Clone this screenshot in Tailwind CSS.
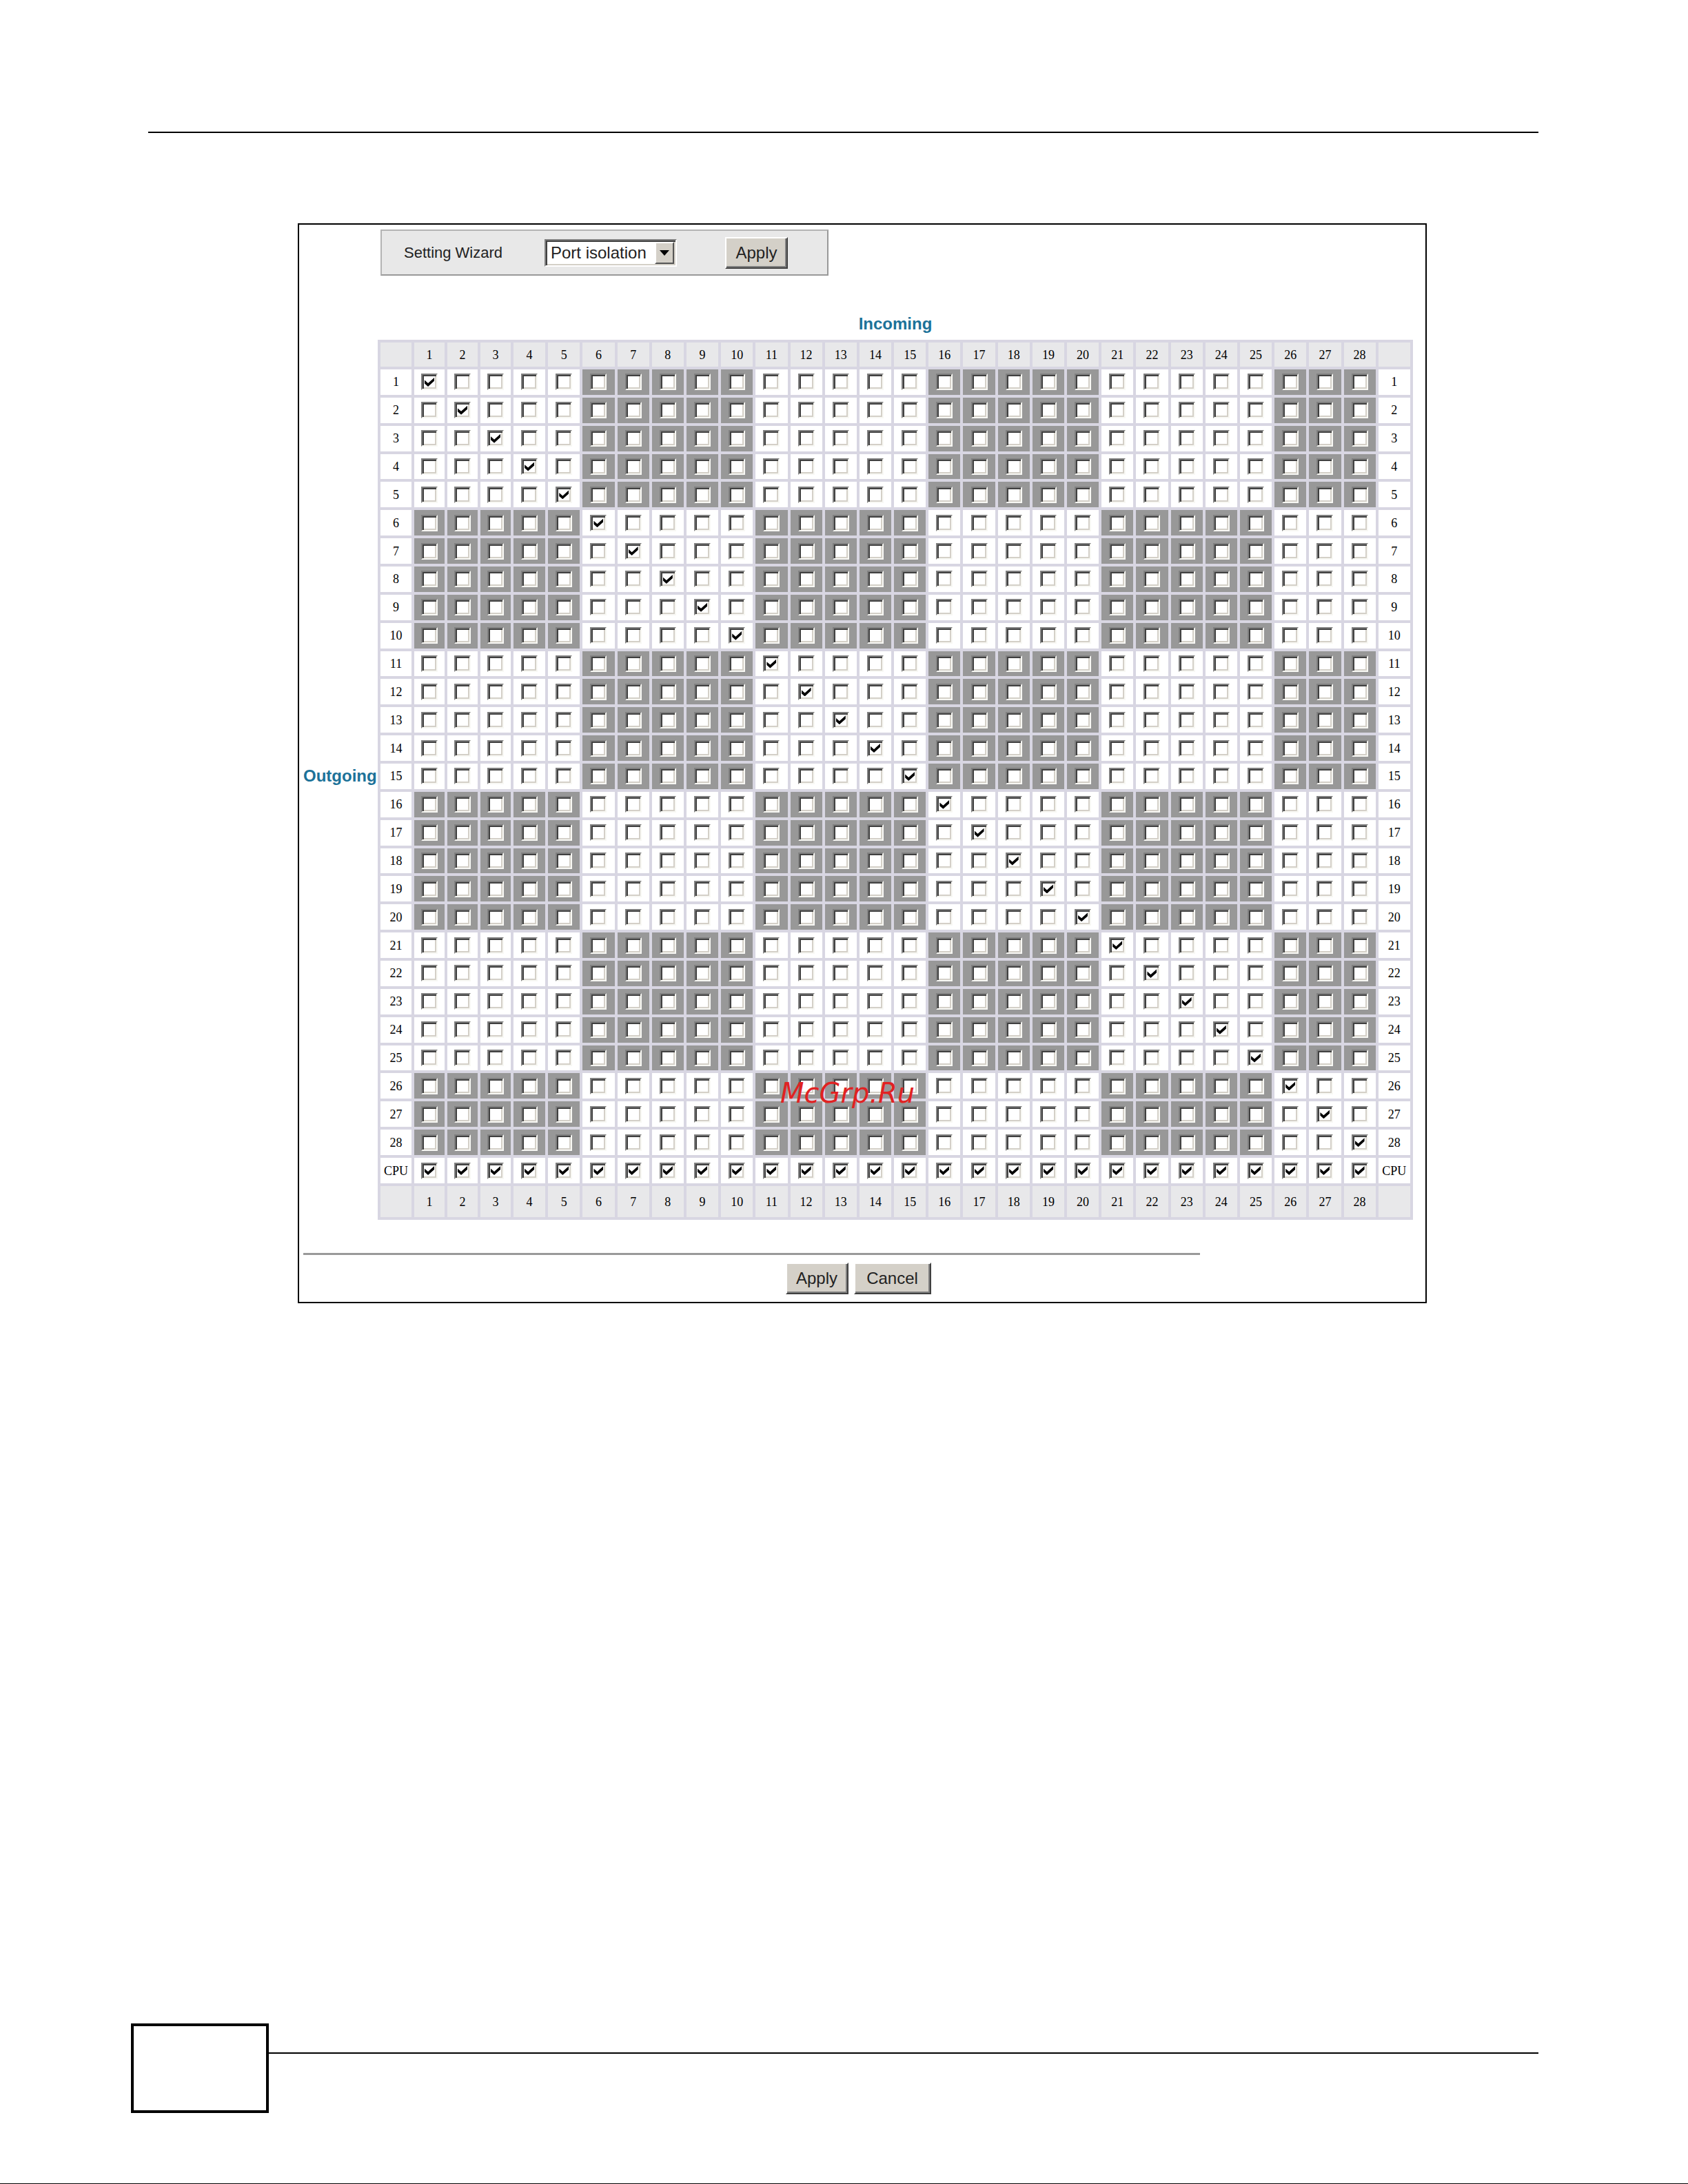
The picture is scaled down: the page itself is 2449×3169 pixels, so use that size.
<!DOCTYPE html>
<html lang="en">
<head>
    <meta charset="UTF-8">
    <meta name="viewport" content="width=device-width, initial-scale=1.0">
    <title>VLAN Port Based Setup - Port Isolation</title>
    <script src="https://cdn.jsdelivr.net/npm/@tailwindcss/browser@4"></script>
</head>
<body class="flex min-h-screen flex-col border-b border-black bg-white font-['Liberation_Sans',Arial,sans-serif] text-2xl text-[#222]">
    <!-- Page header rule -->
    <header class="mr-[217px] ml-[215px] pt-[191px]">
        <hr class="border-t-2 border-black">
    </header>

    <!-- Screen -->
    <main class="relative mt-[131px] mr-[379px] ml-[432px] border-2 border-black pt-[7px] pr-[18px] pb-[11px] pl-[6px]">
        <form id="isolation-form">
            <!-- Setting wizard -->
            <div class="ml-28 flex h-[67px] w-[650px] items-center border-2 border-[#b4b4b4] border-r-[#999] border-b-[#999] bg-[#e8e8e8] pl-8">
                <label for="wizard" class="w-[204px] text-[22px]">Setting Wizard</label>
                <div class="relative w-48">
                    <select id="wizard" class="block h-10 w-full appearance-none border-2 border-[#808080] border-r-white border-b-white bg-white pl-[7px] text-2xl leading-8 shadow-[inset_2px_2px_#404040,inset_-2px_-2px_#d4d0c8]">
                        <option>Port isolation</option>
                        <option>All connected</option>
                    </select>
                    <span class="pointer-events-none absolute top-1 right-1 bottom-1 flex w-7 items-center justify-center border-2 border-white border-r-[#555] border-b-[#555] bg-[#d4d0c8]">
                        <svg class="h-2 w-3.5" viewBox="0 0 14 8"><path d="M0 0h14L7 8z" fill="#000"/></svg>
                    </span>
                </div>
                <button type="button" class="ml-[70px] h-[46px] w-[91px] border-2 border-white border-r-[#404040] border-b-[#404040] bg-[#d4d0c8] shadow-[inset_-2px_-2px_#808080]">Apply</button>
            </div>

            <!-- Port matrix -->
            <p class="mt-[50px] ml-27 pb-1 text-center leading-[39px] font-bold text-[#1c7299]">Incoming</p>
            <div class="flex items-center">
                <p class="w-27 shrink-0 pb-3 font-bold text-[#1c7299]">Outgoing</p>
                <table class="h-[1277px] w-full table-fixed border-collapse border-4 border-[#d8d6e2] text-center font-['Liberation_Serif','Times_New_Roman',serif] text-lg leading-6 text-black">
                    <colgroup>
                        <col class="w-[49px]">
                        <col class="w-12">
                        <col class="w-12">
                        <col class="w-12">
                        <col span="26">
                    </colgroup>
                    <thead id="ports-top" class="bg-[#e8e8ea]"></thead>
                    <tbody id="ports"></tbody>
                    <tfoot id="ports-bottom" class="bg-[#e8e8ea]"></tfoot>
                </table>
            </div>

            <hr class="mt-12 w-[1301px] border-t-3 border-[#999]">
            <div class="mt-[11px] flex justify-center gap-2">
                <button type="submit" class="h-[46px] w-[91px] border-2 border-white border-r-[#404040] border-b-[#404040] bg-[#d4d0c8] shadow-[inset_-2px_-2px_#808080]">Apply</button>
                <button type="reset" class="h-[46px] w-28 border-2 border-white border-r-[#404040] border-b-[#404040] bg-[#d4d0c8] shadow-[inset_-2px_-2px_#808080]">Cancel</button>
            </div>
        </form>

        <!-- Watermark -->
        <span class="pointer-events-none absolute top-[1236px] left-[698px] font-['DejaVu_Sans',Verdana,sans-serif] text-[40px] leading-12 text-[#e02222] italic">McGrp.Ru</span>
    </main>

    <!-- Page number box -->
    <footer class="mt-auto mr-[217px] mb-[102px] ml-[190px] flex">
        <div class="h-[130px] w-[200px] border-4 border-black"></div>
        <hr class="mt-[42px] flex-1 border-t-2 border-black">
    </footer>

    <script>
        const PORTS = 28;
        const BLOCK = 5;

        // Row of port numbers, used above and below the matrix
        const numberRow = (rowClass) => {
            let html = `<tr class="${rowClass}"><td class="border-4 border-[#d8d6e2] p-0"></td>`;
            for (let col = 1; col <= PORTS; col++) {
                html += `<th scope="col" class="border-4 border-[#d8d6e2] p-0 font-normal">${col}</th>`;
            }
            return html + '<td class="border-4 border-[#d8d6e2] p-0"></td></tr>';
        };

        const label = (name) => `<th scope="row" class="border-4 border-[#d8d6e2] p-0 font-normal">${name}</th>`;

        const cell = (name, col, shaded, checked) => `
            <td class="border-4 border-[#d8d6e2] p-0 ${shaded ? 'bg-[#989898]' : 'bg-white'}">
                <input type="checkbox" aria-label="Outgoing ${name}, incoming ${col}" ${checked ? 'checked' : ''}
                    class="mx-auto grid size-6 appearance-none place-content-center border-2 border-[#808080] border-r-[#f8f8f4] border-b-[#f8f8f4] bg-white shadow-[inset_2px_2px_#404040,inset_-2px_-2px_#d4d0c8] checked:before:block checked:before:h-[13px] checked:before:w-[14px] checked:before:bg-black checked:before:content-[''] checked:before:[clip-path:polygon(0_28%,36%_62%,100%_0,100%_38%,36%_100%,0_66%)]">
            </td>`;

        let rows = '';
        for (let row = 1; row <= PORTS + 1; row++) {
            const isCpu = row > PORTS;
            const name = isCpu ? 'CPU' : row;
            rows += '<tr>' + label(name);
            for (let col = 1; col <= PORTS; col++) {
                // Blocks of five ports alternate like a checkerboard
                const block = Math.floor((row - 1) / BLOCK) + Math.floor((col - 1) / BLOCK);
                rows += cell(name, col, !isCpu && block % 2 === 1, isCpu || row === col);
            }
            rows += label(name) + '</tr>';
        }

        document.getElementById('ports-top').innerHTML = numberRow('h-[39px]');
        document.getElementById('ports').innerHTML = rows;
        document.getElementById('ports-bottom').innerHTML = numberRow('h-[49px]');

        document.getElementById('isolation-form').addEventListener('submit', (e) => e.preventDefault());
    </script>
</body>
</html>
